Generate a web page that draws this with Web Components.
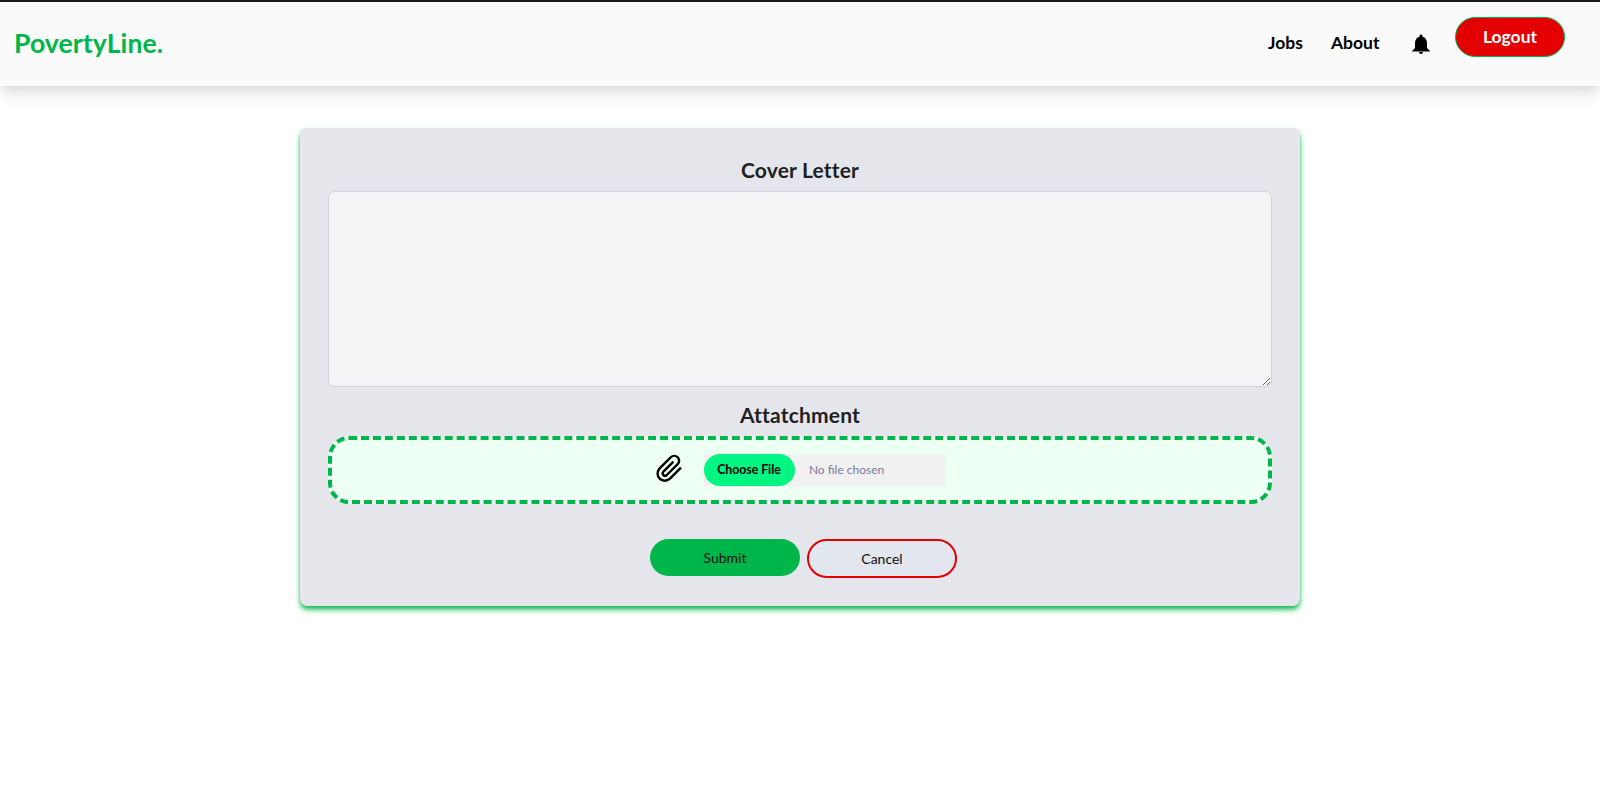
<!DOCTYPE html>
<html lang="en">
<head>
<meta charset="utf-8">
<title>PovertyLine</title>
<style>
html{font-size:14px}
body{margin:0;background:#fff;color:#1f1f1f;font-family:Lato,sans-serif;line-height:1.5;height:802px;overflow:hidden}
</style>
</head>
<body>
<app-shell></app-shell>
<script>
function define(name, html) {
  const t = document.createElement('template');
  t.innerHTML = html;
  customElements.define(name, class extends HTMLElement {
    constructor() {
      super();
      this.attachShadow({mode: 'open'}).appendChild(t.content.cloneNode(true));
    }
  });
}

define('bell-icon', `<style>:host{display:block;width:24px;height:24px}svg{display:block}</style>
<svg width="24" height="24" viewBox="0 0 24 24"><path d="M12 22c1.1 0 2-.9 2-2h-4c0 1.1.89 2 2 2zm6-6v-5c0-3.07-1.64-5.64-4.5-6.32V4c0-.83-.67-1.5-1.5-1.5s-1.5.67-1.5 1.5v.68C7.63 5.36 6 7.92 6 11v5l-3 3v.5h18V19l-3-3z"/></svg>`);

define('clip-icon', `<style>:host{display:block;width:28px;height:28px}svg{display:block}</style>
<svg width="29" height="29" viewBox="0 0 24 24" fill="none" stroke="#000" stroke-width="2" stroke-linecap="butt" stroke-linejoin="round"><path d="M22.3 11.3L13.2 20.4a6 6 0 0 1-8.5-8.5l9.2-9.2a4 4 0 0 1 5.7 5.7l-9.2 9.2a2 2 0 0 1-2.8-2.8l8.5-8.5"/></svg>`);

define('nav-link', `<style>:host{display:block;font-size:17.5px;line-height:24px;font-weight:700;color:#000}</style><slot></slot>`);

define('logout-button', `<style>:host{display:block}
button{display:block;box-sizing:border-box;width:110px;height:40px;margin:0;padding:0;border:1px solid #00b64b;border-radius:20px;background:#e40000;color:#fff;font:700 17.5px/24px Lato,sans-serif}</style>
<button><slot></slot></button>`);

define('top-nav', `<style>
:host{display:flex;box-sizing:border-box;height:86px;border-top:2px solid #1c1a1c;background:#fafafa;padding:0 35px 0 14px;justify-content:space-between;align-items:flex-start;box-shadow:0 10px 15px -1px rgba(0,0,0,.1),0 4px 6px -1px rgba(0,0,0,.05)}
.brand{font-size:26.6px;letter-spacing:.08px;line-height:36px;font-weight:700;color:#00b64b;margin-top:23px}
nav{display:flex;align-items:flex-start}
nav-link{margin:29px 28px 0 0}
bell-icon{margin:30px 22px 0 1.6px}
logout-button{margin-top:15px}
</style>
<div class="brand">PovertyLine.</div>
<nav><nav-link>Jobs</nav-link><nav-link>About</nav-link><bell-icon></bell-icon><logout-button>Logout</logout-button></nav>`);

define('field-heading', `<style>:host{display:block;text-align:center;font-size:21px;letter-spacing:.18px;line-height:28px;font-weight:700;color:#1f1f1f;font-variant-ligatures:none}</style><slot></slot>`);

define('letter-input', `<style>:host{display:block}
textarea{display:block;box-sizing:border-box;width:100%;height:196px;margin:0;border:1px solid #d1d4db;border-radius:7px;background:#f3f4f6;padding:8px;font:14px Lato,sans-serif;resize:both;outline:0}</style>
<textarea aria-label="Cover Letter"></textarea>`);

define('file-picker', `<style>
:host{display:flex;box-sizing:border-box;height:68px;border:4px dashed #00b64b;border-radius:21px;background:#eefff4;justify-content:center;align-items:flex-start}
clip-icon{margin:14px 22px 0 -1px}
.field{display:flex;width:242px;height:32px;margin-top:14px;background:#f1f1f1;font-size:12px;line-height:32px;color:#7a7a9d}
.choose{box-sizing:border-box;width:91px;height:32px;border-radius:16px;background:#00f583;color:#000;font-size:12.25px;font-weight:700;text-align:center;margin-right:14.4px}
</style>
<clip-icon></clip-icon><div class="field"><span class="choose">Choose File</span><span>No file chosen</span></div>`);

define('pill-button', `<style>:host{display:block}
button{display:block;box-sizing:border-box;width:150px;height:37px;margin:0;padding:0;border:0;border-radius:20px;background:#00b64b;color:#0d0d0d;font:14px/20px Lato,sans-serif}
:host([outline]) button{height:39px;border:2px solid #e40000;background:#e2e6ef}</style>
<button><slot></slot></button>`);

define('application-form', `<style>
:host{display:block;box-sizing:border-box;width:1000px;height:478px;margin:42px auto 0;padding:28px;border-radius:7px;background:#e5e6eb;box-shadow:0 4px 6px -1px #00b64b,0 2px 4px -2px #00b64b}
letter-input{margin-top:7px}
.second{margin-top:14px}
file-picker{margin-top:7px}
.actions{display:flex;gap:7px;align-items:flex-start;margin:35px 0 0 322px}
</style>
<field-heading>Cover Letter</field-heading>
<letter-input></letter-input>
<field-heading class="second">Attatchment</field-heading>
<file-picker></file-picker>
<div class="actions"><pill-button>Submit</pill-button><pill-button outline>Cancel</pill-button></div>`);

define('app-shell', `<style>:host{display:flow-root}</style><top-nav></top-nav><application-form></application-form>`);
</script>
</body>
</html>
